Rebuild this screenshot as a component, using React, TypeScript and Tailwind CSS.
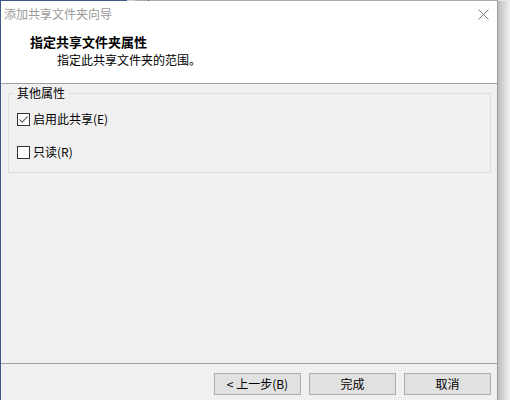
import React from "react";

function CheckBox({ checked }: { checked?: boolean }) {
  return (
    <span className="w-[13px] h-[13px] border border-[#333333] bg-white flex items-center justify-center shrink-0">
      {checked && (
        <svg width="11" height="11" viewBox="0 0 11 11">
          <path d="M1.5 5.5 L4.2 8.2 L9.5 2.5" fill="none" stroke="#6a6a6a" strokeWidth="1.2" />
        </svg>
      )}
    </span>
  );
}

function Btn({ children }: { children: React.ReactNode }) {
  return (
    <button className="w-[87px] h-[22px] border border-[#adadad] bg-[#e1e1e1] text-[12px] leading-none flex items-center justify-center text-black">
      {children}
    </button>
  );
}

export default function App() {
  return (
    <div className="w-[510px] h-[400px] flex flex-col bg-[#f0f0f0] font-['Noto_Sans_CJK_SC','Noto_Sans',sans-serif] text-[12px] text-black overflow-hidden">
      <div className="h-px flex shrink-0">
        <div className="w-[127px] bg-[#3b5b86]" />
        <div className="w-[8px] bg-[#d2d2d2]" />
        <div className="w-[13px] bg-[#ababab]" />
        <div className="w-px bg-[#4d4d4d]" />
        <div className="w-[349px] bg-[#ababab]" />
        <div className="flex-1 bg-[#e4e4e4]" />
      </div>
      <div className="flex-1 flex">
        <div className="w-px bg-[#3b5b86]" />
        <div className="w-[497px] border-r border-[#9c9c9c] flex flex-col">
          <div className="h-[82px] bg-white flex flex-col">
            <div className="h-[26px] flex items-center justify-between">
              <span className="ml-[3px] leading-[16px] text-[#9a9a9a]">添加共享文件夹向导</span>
              <svg className="mr-[8px]" width="11" height="11" viewBox="0 0 11 11">
                <path d="M0.5 0.5 L10.5 10.5 M10.5 0.5 L0.5 10.5" stroke="#7a7a7a" strokeWidth="1" />
              </svg>
            </div>
            <div className="mt-[7px] ml-[29px] font-bold text-[13px] leading-[16px]">指定共享文件夹属性</div>
            <div className="mt-[2px] ml-[56px] leading-[16px]">指定此共享文件夹的范围。</div>
          </div>
          <div className="h-px bg-[#a0a0a0]" />
          <div className="flex-1 flex flex-col">
            <fieldset className="mt-px ml-[7px] mr-[6px] border border-[#dcdcdc] p-0">
              <legend className="ml-[5px] px-[3px] leading-[16px]">其他属性</legend>
              <div className="pl-[8px] pt-[10px] pb-[12px] flex flex-col gap-[17px]">
                <label className="flex items-center h-[16px]">
                  <CheckBox checked />
                  <span className="ml-[3px] leading-[16px]">启用此共享(E)</span>
                </label>
                <label className="flex items-center h-[16px]">
                  <CheckBox />
                  <span className="ml-[3px] leading-[16px]">只读(R)</span>
                </label>
              </div>
            </fieldset>
            <div className="flex-1" />
            <div className="h-px bg-[#a0a0a0]" />
            <div className="pt-[9px] pb-[5px] pr-[6px] flex justify-end gap-[8px]">
              <Btn>&lt; 上一步(B)</Btn>
              <Btn>完成</Btn>
              <Btn>取消</Btn>
            </div>
          </div>
        </div>
        <div className="flex-1 bg-linear-to-r from-[#bdbdbd] to-[#f2f2f2]" />
      </div>
    </div>
  );
}
